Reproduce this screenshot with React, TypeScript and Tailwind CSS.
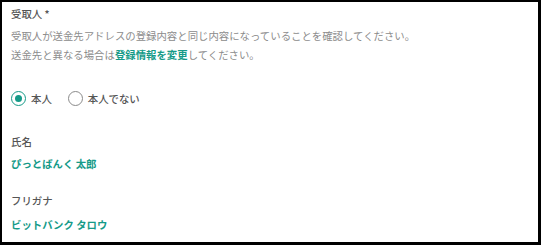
import { useState } from "react";

const jp = "font-['Noto_Sans_CJK_JP','Noto_Sans',sans-serif]";

type RadioProps = {
  label: string;
  checked: boolean;
  onSelect: () => void;
};

function Radio({ label, checked, onSelect }: RadioProps) {
  return (
    <button type="button" onClick={onSelect} className="flex items-center gap-[5px]">
      <span
        className={
          checked
            ? "flex h-[15px] w-[15px] items-center justify-center rounded-full border-[1.5px] border-[#159a88]"
            : "flex h-[15px] w-[15px] items-center justify-center rounded-full border-[1.2px] border-[#8a8a8a]"
        }
      >
        {checked ? <span className="h-[7px] w-[7px] rounded-full bg-[#159a88]" /> : null}
      </span>
      <span className="text-[10.4px] leading-5 font-medium text-[#555]">{label}</span>
    </button>
  );
}

export default function App() {
  const [self, setSelf] = useState(true);

  return (
    <div className={`h-[245px] w-[541px] bg-white ${jp}`}>
      <div className="h-full w-full border-t-2 border-l-2 border-r-[3px] border-b-[3px] border-black pl-[9px] pt-[2px]">
        <p className="text-[10.4px] leading-5 font-medium text-[#555]">受取人 *</p>
        <div className="mt-[2px] text-[10.4px] leading-[19px] text-[#8c8c8c]">
          <p>受取人が送金先アドレスの登録内容と同じ内容になっていることを確認してください。</p>
          <p>
            送金先と異なる場合は
            <a href="#" className="font-semibold text-[#159a88]">
              登録情報を変更
            </a>
            してください。
          </p>
        </div>

        <div className="mt-[24.5px] flex items-center gap-4">
          <Radio label="本人" checked={self} onSelect={() => setSelf(true)} />
          <Radio label="本人でない" checked={!self} onSelect={() => setSelf(false)} />
        </div>

        <p className="mt-[23.5px] text-[10.4px] leading-5 font-medium text-[#555]">氏名</p>
        <p className="mt-[1.5px] text-[10.4px] leading-5 font-bold text-[#159a88]">ぴっとばんく 太郎</p>

        <p className="mt-[17.5px] text-[10.4px] leading-5 font-medium text-[#555]">フリガナ</p>
        <p className="mt-[3.5px] text-[10.4px] leading-5 font-bold text-[#159a88]">ビットバンク タロウ</p>
      </div>
    </div>
  );
}
